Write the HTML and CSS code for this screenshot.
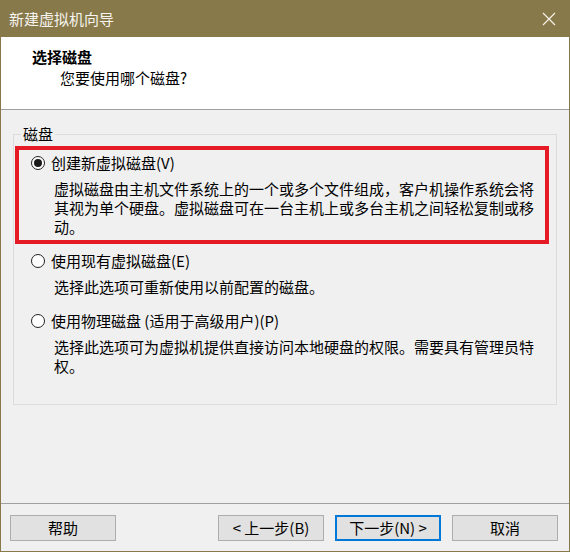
FILE: index.html
```html
<!DOCTYPE html>
<html lang="zh-CN">
<head>
  <meta charset="UTF-8">
  <meta name="viewport" content="width=device-width, initial-scale=1.0">
  <link rel="stylesheet" href="styles.css">
</head>
<body>

<div class="window">
  <div class="titlebar">
    <span class="title">新建虚拟机向导</span>
    <svg class="close" width="14" height="14" viewBox="0 0 14 14">
      <path d="M1 1 L13 13 M13 1 L1 13" stroke="#f4f2ea" stroke-width="1.2" fill="none"/>
    </svg>
  </div>

  <div class="header">
    <div class="header-title">选择磁盘</div>
    <div class="header-sub">您要使用哪个磁盘?</div>
  </div>

  <div class="content">
    <fieldset class="group">
      <legend>磁盘</legend>

      <div class="option highlight">
        <div class="option-row">
          <span class="radio checked"></span>
          <span>创建新虚拟磁盘(V)</span>
        </div>
        <div class="desc">虚拟磁盘由主机文件系统上的一个或多个文件组成，客户机操作系统会将其视为单个硬盘。虚拟磁盘可在一台主机上或多台主机之间轻松复制或移动。</div>
      </div>

      <div class="option">
        <div class="option-row">
          <span class="radio"></span>
          <span>使用现有虚拟磁盘(E)</span>
        </div>
        <div class="desc">选择此选项可重新使用以前配置的磁盘。</div>
      </div>

      <div class="option">
        <div class="option-row">
          <span class="radio"></span>
          <span>使用物理磁盘 (适用于高级用户)(P)</span>
        </div>
        <div class="desc">选择此选项可为虚拟机提供直接访问本地硬盘的权限。需要具有管理员特权。</div>
      </div>
    </fieldset>
  </div>

  <div class="footer">
    <button class="btn">帮助</button>
    <div class="spacer"></div>
    <button class="btn">&lt; 上一步(B)</button>
    <button class="btn focused">下一步(N) &gt;</button>
    <button class="btn">取消</button>
  </div>
</div>

</body>
</html>
```

FILE: styles.css
```css
body {
  margin: 0;
  font-family: "Noto Sans CJK SC", "Noto Sans", sans-serif;
  font-size: 15px;
  color: #000;
}

.window {
  width: 570px;
  height: 552px;
  box-sizing: border-box;
  border: 1px solid #88794a;
  border-top: none;
  background-color: #f0f0f0;
  display: flex;
  flex-direction: column;
}

.titlebar {
  height: 37px;
  flex-shrink: 0;
  background-color: #88794a;
  display: flex;
  align-items: center;
  padding: 0 14px 0 9px;
  margin: 0 -1px;
  color: #f6f4ee;
  line-height: 20px;
}

.title {
  flex: 1;
}

.close {
  display: block;
}

.header {
  background-color: #fff;
  flex-shrink: 0;
  border-bottom: 1px solid #a0a0a0;
  padding: 10px 0 0 31px;
  box-sizing: border-box;
  height: 73px;
}

.header-title {
  font-weight: bold;
  line-height: 20px;
}

.header-sub {
  line-height: 20px;
  margin-top: 1px;
  padding-left: 28px;
}

.content {
  flex: 1;
  padding: 14px 12px 0 12px;
}

.group {
  margin: 0;
  padding: 2px 7px 21px 0;
  min-width: 0;
  border: 1px solid #dcdcdc;
}

.group legend {
  margin-left: 7px;
  padding: 0 2px;
  line-height: 20px;
}

.option {
  margin-left: 1px;
  border: 4px solid transparent;
  padding: 3px 0 4px 12px;
}

.option.highlight {
  border-color: #e51a25;
}

.option-row {
  display: flex;
  align-items: center;
  height: 20px;
  line-height: 20px;
}

.radio {
  width: 14px;
  height: 14px;
  box-sizing: border-box;
  border: 1px solid #222;
  border-radius: 50%;
  background-color: #fff;
  margin-right: 6px;
  display: flex;
  align-items: center;
  justify-content: center;
}

.radio.checked::after {
  content: "";
  width: 8px;
  height: 8px;
  border-radius: 50%;
  background-color: #1a1a1a;
}

.desc {
  margin: 6px 0 0 23px;
  width: 484px;
  line-height: 19px;
}

.footer {
  flex-shrink: 0;
  border-top: 1px solid #a0a0a0;
  display: flex;
  gap: 11px;
  padding: 11px 11px 10px 9px;
}

.spacer {
  flex: 1;
}

.btn {
  width: 106px;
  height: 26px;
  box-sizing: border-box;
  border: 1px solid #adadad;
  background-color: #e1e1e1;
  font-family: inherit;
  font-size: 15px;
  color: #000;
  padding: 0;
  line-height: 20px;
}

.btn.focused {
  border: 2px solid #0078d7;
}
```
